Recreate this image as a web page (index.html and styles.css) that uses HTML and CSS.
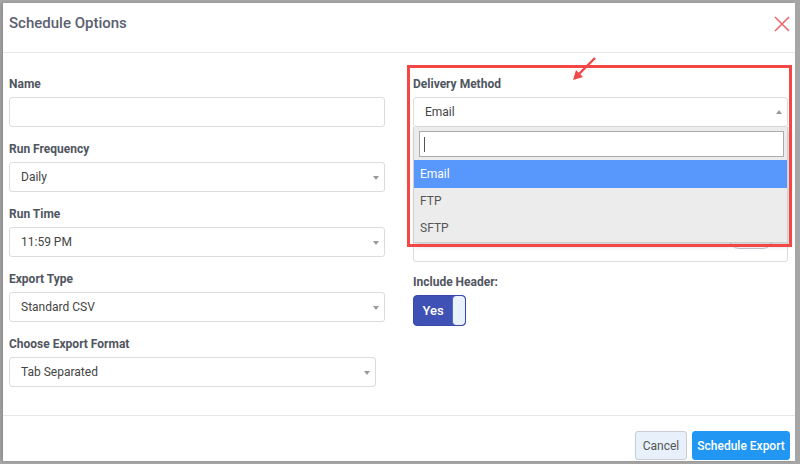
FILE: index.html
```html
<!DOCTYPE html>
<html lang="en">
<head>
    <meta charset="UTF-8">
    <title>Schedule Options</title>
    <link rel="stylesheet" href="styles.css">
</head>
<body>
    <div class="modal">
        <div class="modal-header">
            <h2>Schedule Options</h2>
            <span class="close">
                <svg width="16" height="16" viewBox="0 0 16 16"><path d="M1 1L15 15M15 1L1 15" stroke="#e86a6a" stroke-width="1.6" fill="none"/></svg>
            </span>
        </div>

        <div class="modal-body">
            <div class="col">
                <label>Name</label>
                <div class="field"></div>

                <label>Run Frequency</label>
                <div class="field select">Daily</div>

                <label>Run Time</label>
                <div class="field select">11:59 PM</div>

                <label>Export Type</label>
                <div class="field select">Standard CSV</div>

                <label>Choose Export Format</label>
                <div class="field select narrow">Tab Separated</div>
            </div>

            <div class="col right">
                <label>Delivery Method</label>
                <div class="field select open">Email</div>

                <label>Email To</label>
                <div class="field tall"><span class="pill"></span></div>

                <label>Include Header:</label>
                <div class="toggle">
                    <span class="toggle-on">Yes</span>
                    <span class="knob"></span>
                </div>

                <div class="dropdown">
                    <div class="search"><span class="caret"></span></div>
                    <ul>
                        <li class="active">Email</li>
                        <li>FTP</li>
                        <li>SFTP</li>
                    </ul>
                </div>
            </div>
        </div>

        <div class="modal-footer">
            <button class="btn-cancel">Cancel</button>
            <button class="btn-primary">Schedule Export</button>
        </div>

        <div class="highlight"></div>
        <svg class="pointer" width="30" height="30" viewBox="0 0 30 30">
            <path d="M24 2L6 20" stroke="#f04848" stroke-width="2.4" fill="none"/>
            <path d="M2 24L5 14L12 21Z" fill="#f04848"/>
        </svg>
    </div>
</body>
</html>
```

FILE: styles.css
```css
* { box-sizing: border-box; }
body { margin: 0; background: #a6a6a6; font-family: Roboto, "Liberation Sans", sans-serif; }

.modal { position: relative; margin: 3px 5px 3px 3px; height: 458px; background: #fff; display: flex; flex-direction: column; box-shadow: -2px 0 3px rgba(0,0,0,0.15); }

.modal-header { height: 50px; flex-shrink: 0; border-bottom: 1px solid #e6e6e6; display: flex; justify-content: space-between; padding: 0 5px 0 6px; }
.modal-header h2 { margin: 11px 0 0; font-size: 15px; font-weight: 500; color: #5b6070; }
.close { margin-top: 13px; }

.modal-body { flex: 1; display: flex; gap: 28px; padding: 24px 7px 0 6px; }
.col { width: 376px; display: flex; flex-direction: column; }
.col.right { width: 375px; position: relative; }

label { font-size: 12px; font-weight: 700; color: #50555f; line-height: 15px; margin-bottom: 5px; flex-shrink: 0; }

.field { height: 30px; flex-shrink: 0; border: 1px solid #dcdcdc; border-radius: 3px; margin-bottom: 15px; font-size: 12px; color: #444; padding: 0 11px; display: flex; align-items: center; position: relative; }
.select::after { content: ""; position: absolute; right: 5px; top: 13px; border-left: 3px solid transparent; border-right: 3px solid transparent; border-top: 4px solid #999; }
.select.open::after { border-top: none; border-bottom: 4px solid #999; top: 12px; }
.narrow { width: 367px; }

.field.tall { height: 100px; margin-bottom: 13px; }
.pill { position: absolute; right: 14px; top: 66px; width: 44px; height: 20px; border: 1px solid #c4c4cc; border-radius: 10px; }

.toggle { width: 53px; height: 31px; flex-shrink: 0; border: 1px solid #3949ab; border-radius: 4px; background: #3f51b5; display: flex; overflow: hidden; }
.toggle-on { flex: 1; color: #fff; font-size: 13px; font-weight: 500; display: flex; align-items: center; justify-content: center; }
.knob { width: 13px; background: #e9f1fb; border-radius: 4px; border-left: 1px solid #5666c4; }

.dropdown { position: absolute; top: 50px; left: 0; width: 375px; background: #ececec; border: 1px solid #d0d0d0; border-top: none; box-shadow: 2px 3px 5px rgba(0,0,0,0.2); padding-top: 4px; }
.search { margin: 0 3px 3px 5px; height: 26px; background: #fff; border: 1px solid #aaa; position: relative; }
.caret { position: absolute; left: 4px; top: 5px; width: 1px; height: 15px; background: #555; }
.dropdown ul { list-style: none; margin: 0; padding: 0; }
.dropdown li { height: 27px; line-height: 27px; padding-left: 6px; font-size: 12px; color: #555; }
.dropdown li.active { height: 28px; line-height: 28px; background: #5897fb; color: #fff; }

.modal-footer { height: 46px; flex-shrink: 0; border-top: 1px solid #e6e6e6; display: flex; justify-content: flex-end; align-items: flex-start; gap: 5px; padding: 15px 5px 0 0; }
.modal-footer button { height: 29px; padding: 0; white-space: nowrap; font-family: inherit; font-size: 12px; border-radius: 3px; cursor: pointer; }
.btn-cancel { width: 52px; background: #e8f1fb; border: 1px solid #c9ccd2; color: #555; }
.btn-primary { width: 98px; background: #2196f3; border: 1px solid #2196f3; color: #fff; font-weight: 500; }

.highlight { position: absolute; left: 404px; top: 62px; width: 385px; height: 182px; border: 3px solid #f54646; pointer-events: none; }
.pointer { position: absolute; left: 568px; top: 53px; }
```
